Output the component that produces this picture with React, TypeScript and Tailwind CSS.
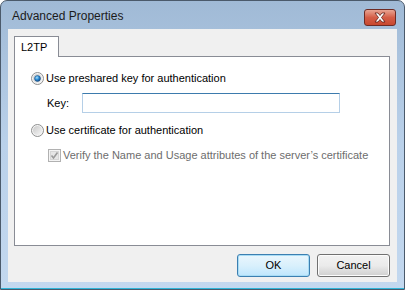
import React from "react";

function Radio({ checked }: { checked: boolean }) {
  return (
    <svg width="13" height="13" viewBox="0 0 13 13" className="shrink-0">
      <defs>
        <linearGradient id={checked ? "rg1" : "rg0"} x1="0" y1="0" x2="1" y2="1">
          <stop offset="0" stopColor="#c9c9c9" />
          <stop offset="1" stopColor="#f6f6f6" />
        </linearGradient>
        <radialGradient id="dot" cx="0.4" cy="0.35" r="0.7">
          <stop offset="0" stopColor="#a8e0f8" />
          <stop offset="0.5" stopColor="#2a8ad4" />
          <stop offset="1" stopColor="#0c3f7a" />
        </radialGradient>
      </defs>
      <circle cx="6.5" cy="6.5" r="6" fill="#f4f4f4" stroke="#8e8f8f" strokeWidth="1" />
      <circle cx="6.5" cy="6.5" r="4.5" fill={`url(#${checked ? "rg1" : "rg0"})`} />
      {checked && <circle cx="6.5" cy="6.5" r="3" fill="url(#dot)" stroke="#1b4f80" strokeWidth="0.5" />}
    </svg>
  );
}

export default function App() {
  const font = { fontFamily: '"Liberation Sans", Arial, sans-serif' };
  return (
    <div
      className="w-[405px] h-[290px] relative overflow-hidden rounded-t-[7px] border border-[#4b5a6b] bg-gradient-to-b from-[#a0bad6] via-[#bad1ea] to-[#c3d8ef] text-[11px] text-black whitespace-nowrap"
      style={font}
    >
      <div className="h-[28px] flex items-center justify-between pl-[11px] pr-[8px]">
        <span className="text-[12px] text-[#1b1b1b] leading-none mt-[1px]">Advanced Properties</span>
        <div className="w-[32px] h-[17px] mt-[4px] rounded-[3px] border border-[#6e2b24] bg-gradient-to-b from-[#e8a493] via-[#d45d47] to-[#c8482f] flex items-center justify-center">
          <svg width="14" height="11" viewBox="0 0 14 11">
            <path d="M2 1 L5 1 L7 3.5 L9 1 L12 1 L8.5 5.5 L12 10 L9 10 L7 7.5 L5 10 L2 10 L5.5 5.5 Z" fill="#ffffff" stroke="#5a1d16" strokeWidth="0.8" strokeLinejoin="round" />
          </svg>
        </div>
      </div>
      <div className="absolute left-[7px] top-[28px] w-[389px] h-[253px] bg-[#f0f0f0] flex flex-col">
        <div className="ml-[6px] mt-[7px] w-[45px] h-[21px] bg-white border border-b-0 border-[#898c95] flex items-center pl-[6px] relative z-10">
          L2TP
        </div>
        <div className="ml-[6px] w-[376px] h-[190px] -mt-[1px] bg-white border border-[#898c95] flex flex-col">
          <div className="mt-[13px] h-[16px] flex items-center pl-[16px] gap-[2px]">
            <Radio checked />
            <span>Use preshared key for authentication</span>
          </div>
          <div className="mt-[7px] h-[20px] flex items-center pl-[32px]">
            <span className="w-[35px]">Key:</span>
            <div className="w-[258px] h-[20px] bg-white border border-[#b5cfe7] border-t-[#3d7bad]" />
          </div>
          <div className="mt-[9px] h-[16px] flex items-center pl-[16px] gap-[2px]">
            <Radio checked={false} />
            <span>Use certificate for authentication</span>
          </div>
          <div className="mt-[9px] h-[16px] flex items-center pl-[33px] gap-[2px] text-[#6d6d6d]">
            <svg width="13" height="13" viewBox="0 0 13 13" className="shrink-0">
              <rect x="0.5" y="0.5" width="12" height="12" fill="#f4f4f4" stroke="#b1b1b1" />
              <rect x="2.5" y="2.5" width="8" height="8" fill="#e6e6e6" stroke="#d6d6d6" />
              <path d="M3.5 6.5 L5.5 9 L9.5 3.5" fill="none" stroke="#9a9a9a" strokeWidth="1.6" />
            </svg>
            <span>Verify the Name and Usage attributes of the server’s certificate</span>
          </div>
        </div>
        <div className="mt-[8px] flex justify-end gap-[7px] pr-[7px]">
          <button className="w-[73px] h-[23px] rounded-[3px] border border-[#3c7fb1] bg-gradient-to-b from-[#eaf6fd] via-[#d9f0fc] to-[#bee6fd] shadow-[inset_0_0_0_1px_#a8dcf5]">
            OK
          </button>
          <button className="w-[73px] h-[23px] rounded-[3px] border border-[#707070] bg-gradient-to-b from-[#f2f2f2] via-[#ebebeb] to-[#cfcfcf] shadow-[inset_0_0_0_1px_#fcfcfc]">
            Cancel
          </button>
        </div>
      </div>
      <div className="absolute left-0 right-0 bottom-0 h-[1px] bg-[#2fb5d8]" />
    </div>
  );
}
